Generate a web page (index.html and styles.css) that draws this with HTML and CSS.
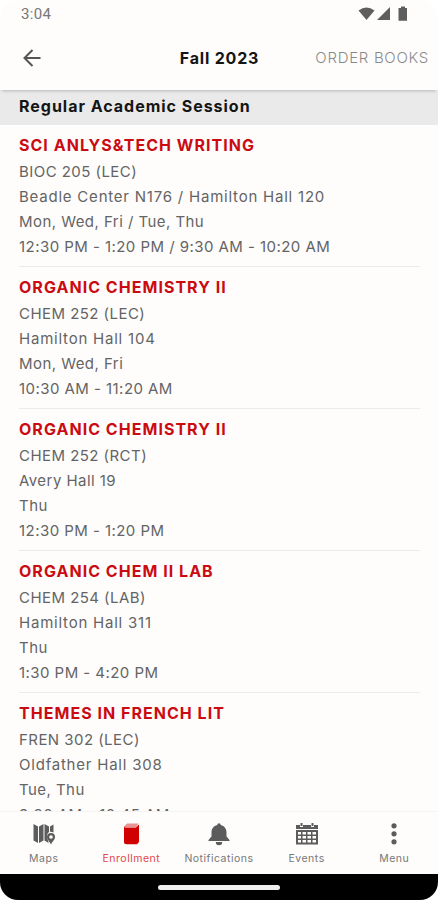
FILE: index.html
```html
<!DOCTYPE html>
<html lang="en">
<head>
    <meta charset="UTF-8">
    <meta name="viewport" content="width=device-width, initial-scale=1.0">
    <title>Fall 2023</title>
    <link rel="stylesheet" href="styles.css">
</head>
<body>
<div class="phone">
    <div class="status">
        <span class="status__time">3:04</span>
        <svg class="status__icons" width="50" height="16" viewBox="0 0 50 16">
            <path d="M0.500 4.500Q8.500-1.500 16.500 4.500L8.500 14Z"/>
            <path d="M32 1V14H19Z"/>
            <path d="M40.500 2h2.500V0.500h4V2h2V14.800h-8.500Z"/>
        </svg>
    </div>
    <header class="header">
        <button class="header__back" aria-label="Back">
            <svg width="18" height="18" viewBox="0 0 18 18"><path d="M17.500 9H2M9.500 1L1.500 9l8 8"/></svg>
        </button>
        <h1 class="header__title">Fall 2023</h1>
        <a class="header__link">ORDER BOOKS</a>
    </header>
    <main class="list">
        <h2 class="list__session">Regular Academic Session</h2>
        <section class="course">
            <h3 class="course__title">SCI ANLYS&amp;TECH WRITING</h3>
            <p>BIOC 205 (LEC)</p>
            <p class="course__place">Beadle Center N176 / Hamilton Hall 120</p>
            <p>Mon, Wed, Fri / Tue, Thu</p>
            <p>12:30 PM - 1:20 PM / 9:30 AM - 10:20 AM</p>
        </section>
        <section class="course">
            <h3 class="course__title">ORGANIC CHEMISTRY II</h3>
            <p>CHEM 252 (LEC)</p>
            <p class="course__place">Hamilton Hall 104</p>
            <p>Mon, Wed, Fri</p>
            <p>10:30 AM - 11:20 AM</p>
        </section>
        <section class="course">
            <h3 class="course__title">ORGANIC CHEMISTRY II</h3>
            <p>CHEM 252 (RCT)</p>
            <p>Avery Hall 19</p>
            <p>Thu</p>
            <p>12:30 PM - 1:20 PM</p>
        </section>
        <section class="course">
            <h3 class="course__title">ORGANIC CHEM II LAB</h3>
            <p>CHEM 254 (LAB)</p>
            <p class="course__place">Hamilton Hall 311</p>
            <p>Thu</p>
            <p>1:30 PM - 4:20 PM</p>
        </section>
        <section class="course">
            <h3 class="course__title">THEMES IN FRENCH LIT</h3>
            <p>FREN 302 (LEC)</p>
            <p class="course__place">Oldfather Hall 308</p>
            <p>Tue, Thu</p>
            <p>9:30 AM - 10:45 AM</p>
        </section>
    </main>
    <nav class="tabs">
        <a class="tabs__item">
            <svg width="24" height="24" viewBox="0 0 24 24">
                <path d="M1.500 2L6 4.500V21L1.500 18.500ZM7 4.500L11.500 2V18.500L7 21ZM12.500 2L17 4.500V10Q14.500 12 15 15.500L16.500 20V21L12.500 18.500ZM18 4.500L21.500 2.500V10.500Q20 9.500 18 9.700Z"/>
                <path fill-rule="evenodd" d="M19 11a4 4 0 0 1 4 4c0 3-2.500 4-4 7.500c-1.500-3.500-4-4.500-4-7.500a4 4 0 0 1 4-4Zm0 2.200a1.800 1.800 0 1 0 0 3.600a1.800 1.800 0 0 0 0-3.600Z"/>
            </svg>
            <span>Maps</span>
        </a>
        <a class="tabs__item tabs__item_active">
            <svg width="24" height="24" viewBox="0 0 24 24">
                <path class="book__pages" d="M5 4.500L8 1.500H19.500L17.500 5H5Z"/>
                <path d="M5 4.500Q5 5.500 7 5.500H17L20 2.500V20L18 22.300H7.500Q5 22.300 5 20.500Z"/>
            </svg>
            <span>Enrollment</span>
        </a>
        <a class="tabs__item">
            <svg width="24" height="24" viewBox="0 0 24 24">
                <path d="M12 1.300c1 0 1.700.8 1.700 1.800c3.800.8 5.800 3.800 5.800 7.400v4l3 3.500v1H1.500v-1l3-3.500v-4c0-3.600 2-6.600 5.800-7.400c0-1 .7-1.800 1.700-1.800ZM8.800 20h6.400a3.200 3.200 0 0 1-6.400 0Z"/>
            </svg>
            <span>Notifications</span>
        </a>
        <a class="tabs__item">
            <svg width="24" height="24" viewBox="0 0 24 24">
                <path d="M1 3h4v2h3V3h8v2h3V3h4v4H1Z"/>
                <path d="M5.500 1h2v3h-2ZM16.500 1h2v3h-2Z"/>
                <path fill-rule="evenodd" d="M1 8h22v14.500H1ZM3 10v2.500h3V10ZM7.500 10v2.500h3.500V10ZM12.500 10v2.500H16V10ZM17.500 10v2.500H21V10ZM3 14v2.500h3V14ZM7.500 14v2.500h3.500V14ZM12.500 14v2.500H16V14ZM17.500 14v2.500H21V14ZM3 18v2.500h3V18ZM7.500 18v2.500h3.500V18ZM12.500 18v2.500H16V18ZM17.500 18v2.500H21V18Z"/>
            </svg>
            <span>Events</span>
        </a>
        <a class="tabs__item">
            <svg width="24" height="24" viewBox="0 0 24 24">
                <circle cx="12" cy="3.800" r="2.600"/>
                <circle cx="12" cy="11.800" r="2.600"/>
                <circle cx="12" cy="19.800" r="2.600"/>
            </svg>
            <span>Menu</span>
        </a>
    </nav>
    <div class="gesture"><div class="gesture__bar"></div></div>
</div>
</body>
</html>
```
FILE: styles.css
```css
* {
    box-sizing: border-box;
    margin: 0;
    padding: 0;
}
body {
    background: #fff;
    font-family: Inter, "Liberation Sans", sans-serif;
    color: #646464;
}
.phone {
    display: flex;
    flex-direction: column;
    height: 900px;
    overflow: hidden;
    background: #fefdfc;
    border-radius: 18px;
}
.status {
    display: flex;
    justify-content: space-between;
    height: 28px;
    padding: 6px 30px 0 21px;
}
.status__time {
    font: 15px/17px Roboto, sans-serif;
    letter-spacing: 0.3px;
    color: #777;
}
.status__icons {
    fill: #5e5e5e;
}
.header {
    display: grid;
    grid-template-columns: 1fr auto 1fr;
    align-items: center;
    flex: none;
    height: 62px;
    padding: 0 9px 3px 23px;
    position: relative;
    box-shadow: 0 3px 3px -2px rgba(0, 0, 0, 0.22);
}
.header__back {
    border: 0;
    background: none;
    width: 18px;
    height: 18px;
}
.header__back svg {
    display: block;
    fill: none;
    stroke: #555;
    stroke-width: 2;
}
.header__title {
    font-size: 16px;
    font-weight: 700;
    letter-spacing: 0.8px;
    color: #151515;
    margin-right: 13px;
}
.header__link {
    justify-self: end;
    font-size: 15px;
    font-weight: 300;
    letter-spacing: 0.7px;
    white-space: nowrap;
    color: #8a8a8a;
}
.list {
    flex: 1;
    min-height: 0;
    overflow: hidden;
}
.list__session {
    height: 35px;
    padding-left: 19px;
    background: #eaeaea;
    color: #151515;
    font-size: 16px;
    line-height: 33px;
    letter-spacing: 0.98px;
}
.course {
    height: 142px;
    margin: 0 18px 0 19px;
    padding-top: 7px;
    border-bottom: 1px solid #ebebea;
    font-size: 15px;
    line-height: 25px;
    letter-spacing: 0.45px;
    white-space: nowrap;
}
.course__title {
    color: #cb0b12;
    font-size: 16px;
    line-height: 27px;
    letter-spacing: 1.03px;
}
.course__place {
    letter-spacing: 0.78px;
}
.tabs {
    display: flex;
    flex: none;
    height: 63px;
    border-top: 1px solid #f5f4f3;
}
.tabs__item {
    display: flex;
    flex: 1;
    flex-direction: column;
    align-items: center;
    gap: 6px;
    padding-top: 10px;
    fill: #5c5c5c;
    font-size: 10.5px;
    line-height: 14px;
    letter-spacing: 0.5px;
    color: #777;
}
.tabs__item_active {
    fill: #d00000;
    color: #e2474b;
}
.book__pages {
    fill: #e99490;
}
.gesture {
    display: flex;
    flex: none;
    justify-content: center;
    height: 26px;
    padding-top: 11px;
    background: #000;
}
.gesture__bar {
    width: 122px;
    height: 5px;
    border-radius: 3px;
    background: #eee;
}
```
